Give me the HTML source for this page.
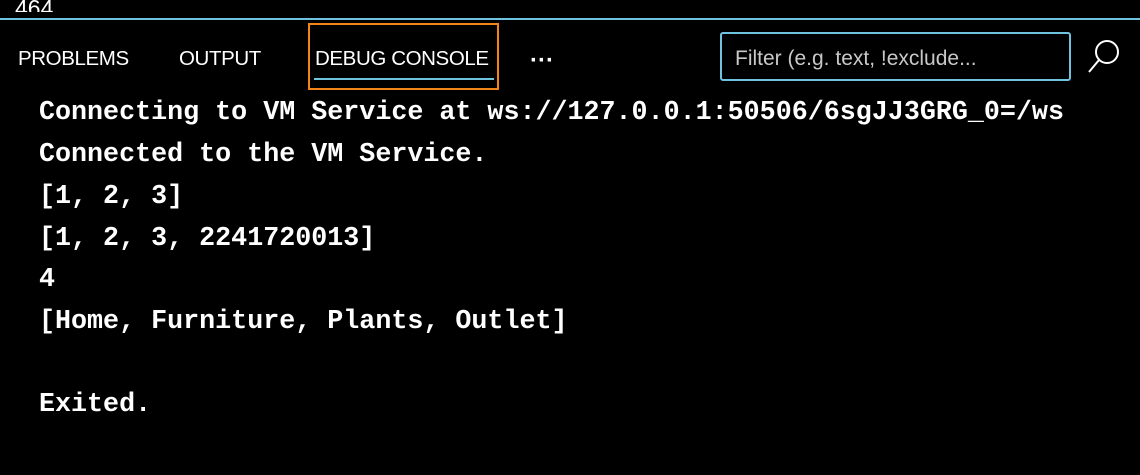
<!DOCTYPE html>
<html><head><style>
body{margin:0;width:1140px;height:475px;background:#000;overflow:hidden;position:relative;font-family:"Liberation Sans",sans-serif;color:#fff}
.a{position:absolute}
.tab{position:absolute;top:47px;font-size:20.5px;letter-spacing:-0.4px}
.mono{position:absolute;left:39px;font-family:"Liberation Mono",monospace;font-size:26.7px;font-weight:bold;white-space:pre;line-height:1}
</style></head><body>
<div class="a" style="left:15px;top:-6px;font-size:23px;height:18px;overflow:hidden;line-height:28px">464</div>
<div class="a" style="left:0;top:18px;width:1140px;height:2px;background:#6fc3df"></div>
<div class="tab" style="left:18px">PROBLEMS</div>
<div class="tab" style="left:179px">OUTPUT</div>
<div class="a" style="left:308px;top:23px;border:2px solid #f38518;box-sizing:border-box;width:191px;height:67px"></div>
<div class="tab" style="left:315px">DEBUG CONSOLE</div>
<div class="a" style="left:314px;top:78px;width:180px;height:2px;background:#6fc3df"></div>
<div class="a" style="left:530px;top:47px;font-size:24px;font-weight:bold">···</div>
<div class="a" style="left:720px;top:32px;width:351px;height:49px;border:2px solid #6fc3df;border-radius:3px;box-sizing:border-box"></div>
<div class="a" style="left:735px;top:47px;font-size:21px;color:#c8c8c8">Filter (e.g. text, !exclude...</div>
<svg class="a" style="left:1086px;top:38px" width="36" height="36" viewBox="0 0 36 36"><circle cx="21" cy="14" r="11" fill="none" stroke="#fff" stroke-width="2"/><line x1="13" y1="22" x2="3" y2="34" stroke="#fff" stroke-width="2"/></svg>
<div class="mono" style="top:100px">Connecting to VM Service at ws://127.0.0.1:50506/6sgJJ3GRG_0=/ws</div>
<div class="mono" style="top:142px">Connected to the VM Service.</div>
<div class="mono" style="top:184px">[1, 2, 3]</div>
<div class="mono" style="top:226px">[1, 2, 3, 2241720013]</div>
<div class="mono" style="top:267px">4</div>
<div class="mono" style="top:309px">[Home, Furniture, Plants, Outlet]</div>
<div class="mono" style="top:392px">Exited.</div>
</body></html>
